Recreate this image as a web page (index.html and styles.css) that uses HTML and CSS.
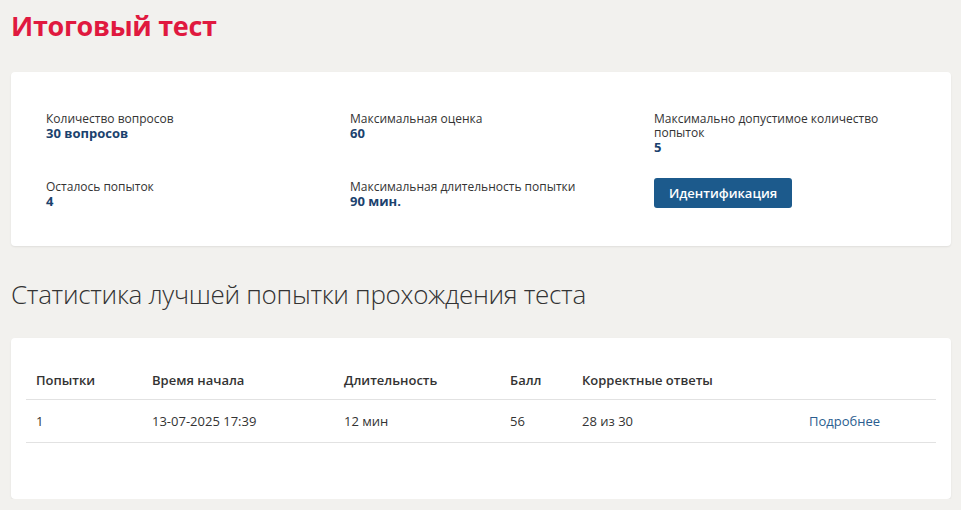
FILE: index.html
```html
<!DOCTYPE html>
<html lang="ru">
<head>
  <meta charset="UTF-8">
  <title>Итоговый тест</title>
  <link rel="stylesheet" href="styles.css">
</head>
<body>

  <h1 class="page-title">Итоговый тест</h1>

  <div class="card info-card">
    <div class="info-grid">
      <div class="info-item">
        <div class="info-label">Количество вопросов</div>
        <div class="info-value">30 вопросов</div>
      </div>
      <div class="info-item">
        <div class="info-label">Максимальная оценка</div>
        <div class="info-value">60</div>
      </div>
      <div class="info-item">
        <div class="info-label">Максимально допустимое количество попыток</div>
        <div class="info-value">5</div>
      </div>
      <div class="info-item">
        <div class="info-label">Осталось попыток</div>
        <div class="info-value">4</div>
      </div>
      <div class="info-item">
        <div class="info-label">Максимальная длительность попытки</div>
        <div class="info-value">90 мин.</div>
      </div>
      <div class="info-item">
        <button class="btn-ident">Идентификация</button>
      </div>
    </div>
  </div>

  <h2 class="section-title">Статистика лучшей попытки прохождения теста</h2>

  <div class="card stats-card">
    <table class="stats-table">
      <thead>
        <tr>
          <th class="c1">Попытки</th>
          <th class="c2">Время начала</th>
          <th class="c3">Длительность</th>
          <th class="c4">Балл</th>
          <th class="c5">Корректные ответы</th>
          <th class="c6"></th>
        </tr>
      </thead>
      <tbody>
        <tr>
          <td>1</td>
          <td>13-07-2025 17:39</td>
          <td>12 мин</td>
          <td>56</td>
          <td>28 из 30</td>
          <td><a href="#" class="more-link">Подробнее</a></td>
        </tr>
      </tbody>
    </table>
  </div>

</body>
</html>
```

FILE: styles.css
```css
body {
  margin: 0;
  padding: 0 10px 0 11px;
  background: #f2f1ee;
  font-family: "Open Sans", "Noto Sans", sans-serif;
  color: #333;
}

.page-title {
  margin: 0;
  padding-top: 7px;
  height: 65px;
  font-size: 27px;
  font-weight: 700;
  color: #e0193f;
  letter-spacing: -0.3px;
}

.card {
  background: #fff;
  border-radius: 4px;
  box-shadow: 0 1px 2px rgba(0, 0, 0, 0.08);
}

.info-card { padding: 40px 35px 37px 35px; }

.info-grid {
  display: grid;
  grid-template-columns: 304px 304px 1fr;
  row-gap: 25px;
}
.info-item { padding-right: 10px; }
.info-label { font-size: 12px; line-height: 14px; color: #333; }
.info-value { font-size: 13px; font-weight: 700; line-height: 15px; color: #1b426e; }

.btn-ident {
  background: #1c5a8c;
  color: #fff;
  border: 0;
  border-radius: 3px;
  padding: 0 15px;
  height: 30px;
  font-family: inherit;
  font-size: 13px;
  font-weight: 600;
  margin-top: -2px;
}

.section-title {
  margin: 0;
  padding: 30px 0 0;
  height: 62px;
  font-size: 26px;
  font-weight: 300;
  color: #333;
  letter-spacing: -0.3px;
}

.stats-card { padding: 22px 15px 56px; }

.stats-table {
  width: 100%;
  border-collapse: collapse;
  font-size: 13px;
  color: #333;
}
.stats-table th,
.stats-table td {
  text-align: left;
  padding: 0 10px;
}
.stats-table th { font-weight: 600; height: 39px; border-bottom: 1px solid #e2e2e2; }
.stats-table td { height: 42px; border-bottom: 1px solid #e2e2e2; color: #333; }
.c1 { width: 96px; }
.c2 { width: 172px; }
.c3 { width: 146px; }
.c4 { width: 52px; }
.c5 { width: 207px; }
.more-link { color: #2a5d8f; text-decoration: none; }
```
